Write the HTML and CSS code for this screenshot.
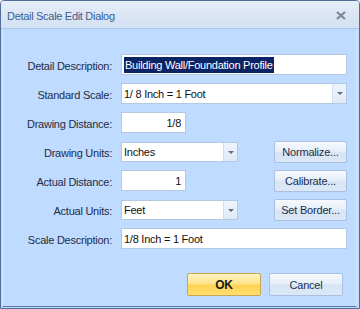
FILE: index.html
```html
<!DOCTYPE html>
<html lang="en">
<head>
    <meta charset="UTF-8">
    <title>Detail Scale Edit Dialog</title>
    <link rel="stylesheet" href="styles.css">
</head>
<body>
    <div class="window">
        <div class="titlebar">
            <span class="title">Detail Scale Edit Dialog</span>
            <span class="close">
                <svg width="10" height="9" viewBox="0 0 10 9">
                    <path d="M1 1 L9 8 M9 1 L1 8" stroke="#7b8797" stroke-width="2.2" fill="none"/>
                </svg>
            </span>
        </div>

        <div class="content">
            <div class="form">
                <label>Detail Description:</label>
                <div class="field">
                    <div class="textbox wide"><span class="selected">Building Wall/Foundation Profile</span></div>
                </div>

                <label>Standard Scale:</label>
                <div class="field">
                    <div class="combo wide"><span class="value">1/ 8 Inch = 1 Foot</span><span class="drop"></span></div>
                </div>

                <label>Drawing Distance:</label>
                <div class="field">
                    <div class="textbox short right">1/8</div>
                </div>

                <label>Drawing Units:</label>
                <div class="field">
                    <div class="combo mid"><span class="value">Inches</span><span class="drop"></span></div>
                    <button class="btn side">Normalize...</button>
                </div>

                <label>Actual Distance:</label>
                <div class="field">
                    <div class="textbox short right">1</div>
                    <button class="btn side">Calibrate...</button>
                </div>

                <label>Actual Units:</label>
                <div class="field">
                    <div class="combo mid"><span class="value">Feet</span><span class="drop"></span></div>
                    <button class="btn side">Set Border...</button>
                </div>

                <label>Scale Description:</label>
                <div class="field">
                    <div class="textbox wide">1/8 Inch = 1 Foot</div>
                </div>
            </div>

            <div class="actions">
                <button class="btn ok">OK</button>
                <button class="btn cancel">Cancel</button>
            </div>
        </div>
    </div>
</body>
</html>
```

FILE: styles.css
```css
body {
    margin: 0;
    padding: 0;
    background-color: #ffffff;
    font-family: "Liberation Sans", Arial, sans-serif;
    font-size: 11px;
    color: #1b2b44;
}

.window {
    width: 360px;
    height: 309px;
    box-sizing: border-box;
    border: 1px solid #4f6d96;
    border-radius: 4px 4px 0 0;
    background-color: #bfdbff;
    display: flex;
    flex-direction: column;
}

/* title bar */
.titlebar {
    height: 27px;
    display: flex;
    align-items: center;
    justify-content: space-between;
    padding: 0 13px 0 6px;
    background: linear-gradient(#e6eef9, #dbe6f5 50%, #d3e1f3);
    border-bottom: 1px solid #aac5e8;
    border-radius: 3px 3px 0 0;
}

.title {
    font-size: 11px;
    letter-spacing: -0.3px;
    color: #3c5f8f;
    padding-top: 2px;
}

.close {
    display: flex;
    padding-top: 2px;
}

/* form */
.content {
    flex: 1;
    padding: 25px 13px 0 0;
    border: 1px solid #d4e5fb;
    border-top: 0;
    border-bottom: 1px solid #5a78a0;
    margin: 0 2px 1px 1px;
}

.form {
    display: grid;
    grid-template-columns: 109px 226px;
    grid-auto-rows: 21px;
    column-gap: 9px;
    row-gap: 8px;
}

.form label {
    text-align: right;
    align-self: center;
    letter-spacing: -0.25px;
    color: #1f2d45;
    padding-top: 2px;
}

.field {
    display: flex;
    align-items: center;
}

.textbox,
.combo {
    box-sizing: border-box;
    height: 21px;
    background-color: #fff;
    border: 1px solid #b3c8e3;
    color: #111;
    letter-spacing: -0.25px;
    display: flex;
    align-items: center;
    padding: 0 2px;
}

.wide {
    width: 226px;
}

.mid {
    width: 117px;
    height: 20px;
}

.short {
    width: 65px;
}

.right {
    justify-content: flex-end;
    padding-right: 4px;
}

.selected {
    background-color: #0b2466;
    color: #fff;
    padding: 2px 1px 2px 1px;
}

.combo {
    padding-right: 0;
}

.combo .value {
    flex: 1;
    padding-top: 1px;
}

.drop {
    width: 13px;
    height: 100%;
    background: linear-gradient(#eef4fc, #dfeaf8);
    border-left: 1px solid #d3e0f1;
    position: relative;
}

.drop::after {
    content: "";
    position: absolute;
    left: 4px;
    top: 8px;
    border-left: 3px solid transparent;
    border-right: 3px solid transparent;
    border-top: 3px solid #5d6f88;
}

/* buttons */
.btn {
    box-sizing: border-box;
    font-family: "Liberation Sans", Arial, sans-serif;
    font-size: 11px;
    letter-spacing: -0.2px;
    color: #1e2f4a;
    border: 1px solid #a9c0de;
    border-radius: 2px;
    background: linear-gradient(#f6f9fe, #e6eff9 45%, #d6e4f5 55%, #dce8f7);
    padding: 0;
    cursor: pointer;
}

.side {
    width: 73px;
    height: 22px;
    margin-left: auto;
}

.actions {
    display: flex;
    justify-content: flex-end;
    gap: 8px;
    margin-top: 24px;
}

.ok,
.cancel {
    width: 74px;
    height: 23px;
}

.ok {
    font-weight: bold;
    font-size: 12px;
    color: #1a1a1a;
    border-color: #c9a64f;
    background: linear-gradient(#fff3c4, #ffe48a 45%, #ffd453 55%, #ffdd6f);
}
```
